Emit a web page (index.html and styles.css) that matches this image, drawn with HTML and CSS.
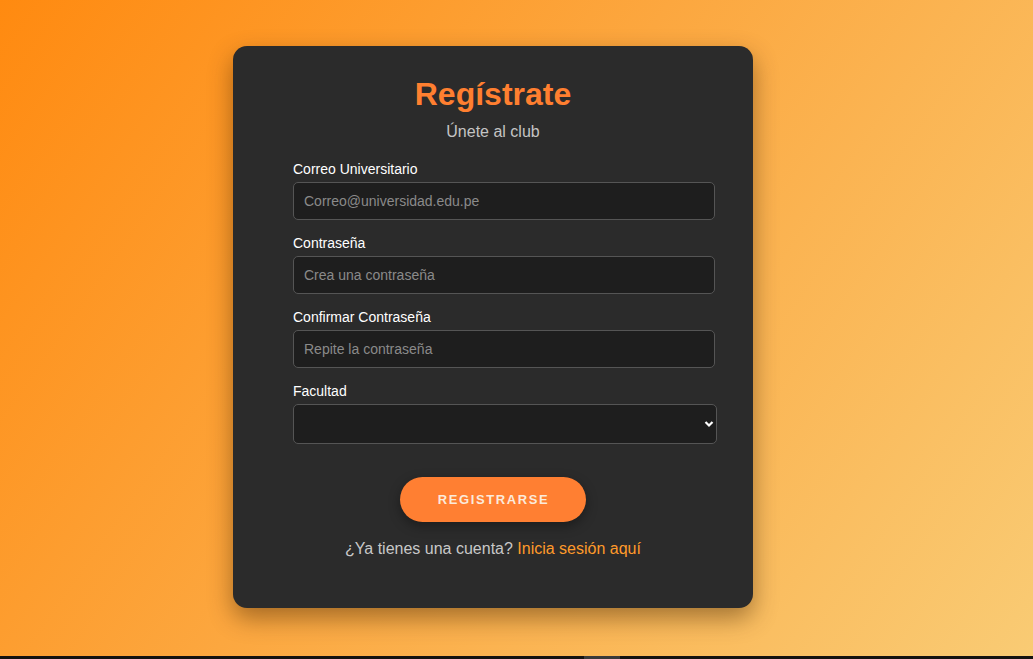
FILE: index.html
```html
<!DOCTYPE html>
<html lang="es">
<head>
<meta charset="utf-8">
<title>Regístrate</title>
<link rel="stylesheet" href="styles.css">
</head>
<body>
<main class="page">
  <section class="card">
    <h1 class="title">Regístrate</h1>
    <p class="subtitle">Únete al club</p>
    <form class="form">
      <div class="group">
        <label class="label" for="email">Correo Universitario</label>
        <input class="field" id="email" type="email" placeholder="Correo@universidad.edu.pe">
      </div>
      <div class="group">
        <label class="label" for="pass">Contraseña</label>
        <input class="field" id="pass" type="password" placeholder="Crea una contraseña">
      </div>
      <div class="group">
        <label class="label" for="pass2">Confirmar Contraseña</label>
        <input class="field" id="pass2" type="password" placeholder="Repite la contraseña">
      </div>
      <div class="group">
        <label class="label" for="fac">Facultad</label>
        <div class="select-wrap">
          <select class="select" id="fac">
            <option></option>
          </select>
          <svg class="chev" width="10" height="8" viewBox="0 0 10 8"><path d="M1.5 2 L5 5.5 L8.5 2" fill="none" stroke="#fff" stroke-width="2.2"/></svg>
        </div>
      </div>
      <div class="actions">
        <button type="button" class="btn">REGISTRARSE</button>
      </div>
    </form>
    <p class="foot">¿Ya tienes una cuenta? <a class="link" href="#">Inicia sesión aquí</a></p>
  </section>
</main>
<div class="bottom-bar"><span class="thumb"></span></div>
</body>
</html>
```

FILE: styles.css
```css
* { box-sizing: border-box; }
html, body { margin: 0; padding: 0; background: #141210; }
body {
  font-family: "Liberation Sans", Arial, sans-serif;
  width: 1033px;
  height: 659px;
  overflow: hidden;
}
.page {
  height: 656px;
  background: linear-gradient(125deg, #ff8a10 0%, #fca73f 45%, #f9cb74 100%);
  display: flex;
  justify-content: center;
  align-items: flex-start;
  padding: 46px 47px 0 0;
}
.card {
  width: 520px;
  height: 562px;
  background: #2b2b2b;
  border-radius: 14px;
  box-shadow: 0 10px 24px rgba(60, 30, 0, 0.45);
  padding: 30px 60px 0;
  color: #fff;
}
.title {
  margin: 0;
  text-align: center;
  font-size: 32px;
  line-height: 37px;
  font-weight: bold;
  color: #ff7f30;
}
.subtitle {
  margin: 10px 0 20px;
  text-align: center;
  font-size: 16px;
  line-height: 18px;
  color: #c4c4c4;
}
.form { width: 400px; }
.group {
  display: flex;
  flex-direction: column;
  margin-bottom: 15px;
}
.label {
  font-size: 14px;
  line-height: 16px;
  margin-bottom: 5px;
  color: #fff;
}
.field {
  width: 422px;
  height: 38px;
  padding: 0 10px;
  background: #1e1e1e;
  border: 1px solid #555;
  border-radius: 5px;
  color: #ddd;
  font-family: inherit;
  font-size: 14px;
  outline: none;
}
.field::placeholder { color: #8a8a8a; }
.select-wrap {
  position: relative;
  width: 424px;
}
.select {
  width: 424px;
  height: 40px;
  background: #1e1e1e;
  border: 1px solid #555;
  border-radius: 5px;
  color: #ddd;
  font-family: inherit;
  font-size: 14px;
  appearance: none;
  -webkit-appearance: none;
  outline: none;
}
.chev {
  position: absolute;
  right: 3px;
  top: 16px;
  pointer-events: none;
}
.actions {
  display: flex;
  justify-content: center;
  padding-top: 18px;
}
.btn {
  width: 186px;
  height: 45px;
  border: none;
  border-radius: 23px;
  background: #ff7f32;
  color: #fbeadc;
  font-family: inherit;
  font-size: 13px;
  font-weight: bold;
  letter-spacing: 1.6px;
  padding: 0 0 0 1px;
  box-shadow: 0 4px 12px rgba(0, 0, 0, 0.35);
}
.foot {
  margin: 18px 0 0;
  text-align: center;
  font-size: 16px;
  line-height: 18px;
  color: #c8c8c8;
}
.link {
  color: #ff9a2a;
  text-decoration: none;
}
.bottom-bar {
  height: 3px;
  background: #141210;
  position: relative;
}
.thumb {
  position: absolute;
  left: 584px;
  width: 36px;
  top: 0;
  height: 3px;
  background: #3a3a3a;
}
```
